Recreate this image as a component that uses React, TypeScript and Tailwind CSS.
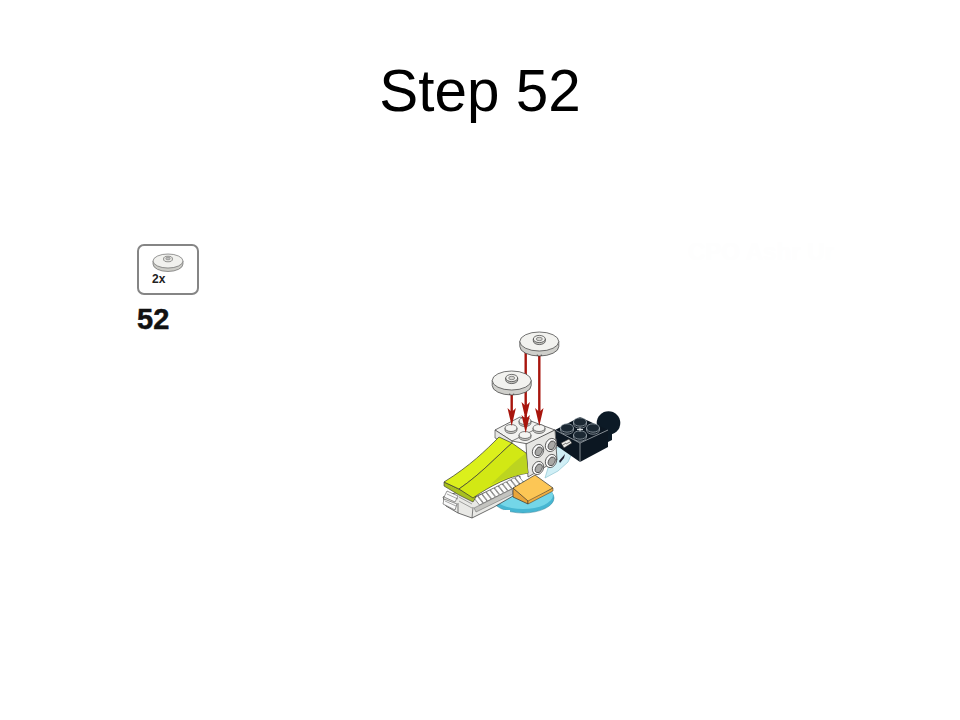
const holes = [
  [538, 451],
  [551, 445],
  [538, 468],
  [551, 461],
];
const blackStuds = [
  [580, 423],
  [567, 429],
  [593, 429],
  [580, 436],
];
const whiteStuds = [
  [525, 422],
  [511, 429],
  [539, 429],
  [525, 436],
];
const teeth = Array.from({ length: 11 }, (_, i) => i);

function Disc({ cx, cy }: { cx: number; cy: number }) {
  const rx = 19.5;
  const ry = 9.5;
  const h = 5;
  return (
    <g stroke="#3a3a3a" strokeWidth="0.7">
      <path d={`M${cx - rx} ${cy}v${h}a${rx} ${ry} 0 0 0 ${rx * 2} 0v-${h}z`} fill="#cfcfcb" />
      <ellipse cx={cx} cy={cy} rx={rx} ry={ry} fill="#f2f2ef" />
      <path d={`M${cx - 2} ${cy + ry + h - 1.5}v1.5M${cx + 2} ${cy + ry + h - 1.5}v1.5`} />
      <path d={`M${cx - 6} ${cy - 2.5}v2a6 3.6 0 0 0 12 0v-2z`} fill="#c6c6c2" />
      <ellipse cx={cx} cy={cy - 2.5} rx="6" ry="3.6" fill="#eeeeeb" />
      <ellipse cx={cx} cy={cy - 2.5} rx="3" ry="1.7" fill="#d4d4d0" strokeWidth="0.5" />
    </g>
  );
}

function Arrow({ x, y1, y2 }: { x: number; y1: number; y2: number }) {
  return (
    <g fill="#a8150d" stroke="none">
      <rect x={x - 1.2} y={y1} width="2.4" height={y2 - y1 - 8} />
      <path d={`M${x - 4.2} ${y2 - 18}L${x} ${y2 - 14}L${x + 4.2} ${y2 - 18}L${x} ${y2}z`} />
    </g>
  );
}

function Model() {
  return (
    <svg width="230" height="215" viewBox="420 320 230 215" className="block blur-[0.4px]">
      {/* black ball */}
      <path d="M600 428L612 420L612 440L600 446z" fill="#0c1a26" />
      <circle cx="608.5" cy="423" r="11.8" fill="#0c1a26" />
      {/* blue round base */}
      <ellipse cx="523" cy="498" rx="31" ry="15" fill="#46b6d2" stroke="#2a7f95" strokeWidth="0.5" />
      <ellipse cx="523" cy="495" rx="30" ry="14" fill="#74d6e8" />
      <path d="M504 510h6v3h-6z" fill="#ffffff" />
      {/* glass piece */}
      <path d="M545 478L554 448L564 447L572 453L568 462L558 471z" fill="#d0eff6" stroke="#8fc6d3" strokeWidth="0.7" />
      <path d="M559 461L565 454L564 458L560 463z" fill="#223" />
      {/* black brick */}
      <path d="M555 430L580 417L608 430L608 447L580 462L557 446z" fill="#0c1722" />
      <path d="M556 430.5L580 443L608 430M580 443V462" fill="none" stroke="#d8dde0" strokeWidth="0.6" />
      {blackStuds.map(([x, y]) => (
        <g key={`${x}-${y}`} stroke="#aeb8bf" strokeWidth="0.7">
          <path d={`M${x - 6.5} ${y - 1}v2a6.5 4.2 0 0 0 13 0v-2z`} fill="#0c1722" />
          <ellipse cx={x} cy={y - 1} rx="6.5" ry="4.2" fill="#1b2833" />
        </g>
      ))}
      <path d="M577 429.5h6M580 427.5v4" stroke="#d8dde0" strokeWidth="1" />
      <path d="M561 443L569 439L572 443L564 448z" fill="#ecece8" stroke="#222" strokeWidth="0.6" />
      <path d="M566 444L570 442M563 445L566 443" stroke="#222" strokeWidth="0.6" />
      {/* white bricks */}
      <path d="M495 430L520 417L555 430L528 444L512 441z" fill="#f2f2f0" stroke="#333" strokeWidth="0.7" strokeLinejoin="round" />
      <path d="M495 430V438L512 446V441z" fill="#e5e5e2" stroke="#333" strokeWidth="0.6" />
      <path d="M512 441L538 428" fill="none" stroke="#333" strokeWidth="0.6" />
      <path d="M526 444L555 430L557 460L528 477z" fill="#e6e6e3" stroke="#333" strokeWidth="0.7" strokeLinejoin="round" />
      {holes.map(([x, y]) => (
        <g key={`${x}-${y}`} stroke="#333" strokeWidth="0.7" transform={`rotate(25 ${x} ${y})`}>
          <ellipse cx={x} cy={y} rx="5.4" ry="6.8" fill="#fbfbfb" />
          <ellipse cx={x + 0.8} cy={y} rx="3.2" ry="4.6" fill="#a8a8a6" />
        </g>
      ))}
      {whiteStuds.map(([x, y]) => (
        <g key={`${x}-${y}`} stroke="#333" strokeWidth="0.6">
          <path d={`M${x - 6} ${y - 1}v2a6 3.5 0 0 0 12 0v-2z`} fill="#c9c9c6" />
          <ellipse cx={x} cy={y - 1} rx="6" ry="3.5" fill="#f4f4f2" />
        </g>
      ))}
      {/* white toothed base */}
      <path d="M443 497L446 506L458 513L472 518L494 507L520 492L520 476L473 498L458 492z" fill="#e9e9e6" stroke="#333" strokeWidth="0.7" strokeLinejoin="round" />
      <path d="M473 507L472 518M458 503V513" stroke="#333" strokeWidth="0.6" fill="none" />
      <path d="M474 508L512 489L513 494L476 512z" fill="#c4c4c0" stroke="#444" strokeWidth="0.4" />
      {teeth.map((i) => (
        <path key={i} d={`M${474 + i * 4.1} ${498 - i * 2.05}l5.5 7l3.4 -1.8l-5.5 -7z`} fill="#fcfcfb" stroke="#333" strokeWidth="0.5" />
      ))}
      <path d="M447 491l-3 6l11 5l3 -6zM444 499l-1 5l12 6l2 -6z" fill="#fafafa" stroke="#333" strokeWidth="0.5" />
      <path d="M447 494l11 5M445 501l11 5M459 497l13 7M459 501l13 7" stroke="#555" strokeWidth="0.5" fill="none" />
      {/* lime curved slopes */}
      <path d="M444 482V486L459 495L473 502L476 497L459 489z" fill="#a8bf1f" stroke="#333" strokeWidth="0.6" strokeLinejoin="round" />
      <path d="M444 482C470 466 486 450 499 437L512 443C496 457 482 473 459 489z" fill="#dbf01c" stroke="#333" strokeWidth="0.7" strokeLinejoin="round" />
      <path d="M459 489C482 473 496 457 512 443L526 453L528 473C510 476 490 486 473 498z" fill="#d2e814" stroke="#333" strokeWidth="0.7" strokeLinejoin="round" />
      <path d="M490 485C502 474 514 462 526 453L528 473C515 475 502 479 490 485z" fill="#bcd420" />
      {/* orange slope */}
      <path d="M513 488L535 475L553 488L528 503z" fill="#fcc655" stroke="#333" strokeWidth="0.7" strokeLinejoin="round" />
      <path d="M513 488L528 501L528 504L513 497z" fill="#e8a53a" stroke="#333" strokeWidth="0.7" strokeLinejoin="round" />
      <path d="M528 501L553 488V491L528 504z" fill="#eead40" stroke="#333" strokeWidth="0.5" />
      {/* arrows and discs */}
      <Arrow x={525.7} y1={350} y2={420} />
      <Arrow x={525.7} y1={415} y2={433} />
      <Arrow x={539.3} y1={350} y2={426} />
      <Disc cx={539.3} cy={341.5} />
      <Arrow x={511.7} y1={390} y2={426} />
      <Disc cx={511.7} cy={380.5} />
    </svg>
  );
}

function PartsBox() {
  return (
    <div className="flex h-[51px] w-[62px] flex-col items-center rounded-[7px] border-2 border-[#858585] bg-white pt-[7px]">
      <svg width="32" height="20" viewBox="0 0 32 20" className="block blur-[0.3px]">
        <path d="M1 8v3a15 7.5 0 0 0 30 0V8z" fill="#cdcdc8" stroke="#555" strokeWidth="0.6" />
        <ellipse cx="16" cy="8" rx="15" ry="7" fill="#f1f1ee" stroke="#555" strokeWidth="0.6" />
        <ellipse cx="16" cy="6" rx="4.5" ry="2.8" fill="#e6e6e2" stroke="#555" strokeWidth="0.6" />
        <ellipse cx="16" cy="5.5" rx="2.2" ry="1.3" fill="#bbb" stroke="#555" strokeWidth="0.4" />
      </svg>
      <span className="self-start pl-[13px] text-[12px] leading-[12px] font-bold text-[#222]">2x</span>
    </div>
  );
}

export default function App() {
  return (
    <div className="flex h-[720px] w-[960px] flex-col overflow-hidden bg-white font-['Liberation_Sans',sans-serif]">
      <h1 className="pt-[57px] text-center text-[58.4px] leading-[67px] font-normal text-black">Step 52</h1>
      <div className="relative flex pt-[120px] pl-[137px]">
        <div className="flex w-[283px] flex-col">
          <PartsBox />
          <span className="mt-[8px] text-[29px] leading-[32px] font-bold text-[#111] [-webkit-text-stroke:0.5px_#111]">52</span>
        </div>
        <div className="mt-[76px]">
          <Model />
        </div>
        <span className="absolute top-[114px] left-[688px] text-[24px] leading-[28px] font-bold text-[#fefefe]">CPO Ashr Ur</span>
      </div>
    </div>
  );
}
